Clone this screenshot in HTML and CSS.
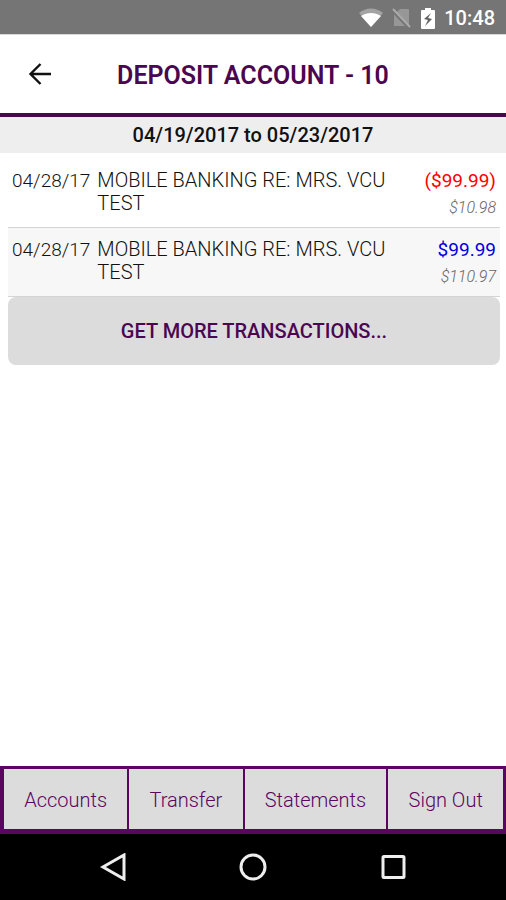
FILE: index.html
```html
<!DOCTYPE html>
<html lang="en">
<head>
<meta charset="utf-8">
<meta name="viewport" content="width=device-width, initial-scale=1">
<title>Deposit Account - 10</title>
<link rel="stylesheet" href="styles.css">
</head>
<body>
<div class="status">
  <svg class="status-icon wifi" width="24" height="20" viewBox="0 0 24 20" aria-hidden="true">
    <path d="M0 5C7-1 17-1 24 5L12 19Z" fill="#a3a3a3"/>
    <path d="M2 8C8 4 16 4 22 8L12 19Z" fill="#fff"/>
  </svg>
  <svg class="status-icon sim" width="20" height="20" viewBox="0 0 20 20" aria-hidden="true">
    <path d="M8 1H16Q17 1 17 2V18H2V7Z" fill="#979797"/>
    <path d="M0 2L17 20" stroke="#757575" stroke-width="3"/>
    <path d="M1 1L18 19" stroke="#aaa" stroke-width="2"/>
  </svg>
  <svg class="status-icon battery" width="14" height="21" viewBox="0 0 14 21" aria-hidden="true">
    <path d="M4 0H10V2H13Q14 2 14 3V20Q14 21 13 21H1Q0 21 0 20V3Q0 2 1 2H4Z" fill="#fff"/>
    <path d="M10 5L3 11L7 12L4 18L11 11L7 10Z" fill="#606060"/>
  </svg>
  <span>10:48</span>
</div>
<header class="header">
  <button class="back" type="button" aria-label="Back">
    <svg width="24" height="24" viewBox="0 0 24 24" aria-hidden="true">
      <path d="M12.500 2L2.500 12L12.500 22M2.500 12H23" fill="none" stroke="#111" stroke-width="2.400"/>
    </svg>
  </button>
  <h1>DEPOSIT ACCOUNT - 10</h1>
</header>
<main class="main">
  <h2 class="range">04/19/2017 to 05/23/2017</h2>
  <div class="list">
    <table class="transactions">
      <tbody>
        <tr>
          <td class="date">04/28/17</td>
          <td class="desc">MOBILE BANKING RE: MRS. VCU TEST</td>
          <td class="money"><span class="debit">($99.99)</span><em>$10.98</em></td>
        </tr>
        <tr>
          <td class="date">04/28/17</td>
          <td class="desc">MOBILE BANKING RE: MRS. VCU TEST</td>
          <td class="money"><span class="credit">$99.99</span><em>$110.97</em></td>
        </tr>
      </tbody>
    </table>
    <button class="more" type="button">GET MORE TRANSACTIONS...</button>
  </div>
</main>
<nav class="tabs">
  <a href="#accounts">Accounts</a>
  <a href="#transfer">Transfer</a>
  <a href="#statements">Statements</a>
  <a href="#signout">Sign Out</a>
</nav>
<div class="system">
  <button type="button" aria-label="System back">
    <svg width="28" height="28" viewBox="0 0 28 28" aria-hidden="true"><path d="M25 2V26L4 14Z"/></svg>
  </button>
  <button type="button" aria-label="Home">
    <svg width="28" height="28" viewBox="0 0 28 28" aria-hidden="true"><circle cx="14" cy="14" r="12"/></svg>
  </button>
  <button type="button" aria-label="Recent apps">
    <svg width="28" height="28" viewBox="0 0 28 28" aria-hidden="true"><rect x="4" y="3.500" width="21" height="21" rx="1"/></svg>
  </button>
</div>
</body>
</html>
```
FILE: styles.css
```css
* {
  box-sizing: border-box;
}

body {
  margin: 0;
  min-height: 100vh;
  display: flex;
  flex-direction: column;
  background: #fff;
  color: #111;
  font-family: Roboto, sans-serif;
  font-size: 19px;
  font-weight: 300;
}

button {
  font-family: inherit;
  border: 0;
  padding: 0;
  background: none;
}

svg {
  display: block;
}

.status {
  height: 34px;
  display: flex;
  align-items: center;
  justify-content: flex-end;
  gap: 9px;
  padding: 2px 11px 0 0;
  background: #757575;
  color: #fff;
  font-size: 20px;
  font-weight: 500;
}

.header {
  display: grid;
  grid-template-columns: 80px 1fr 80px;
  align-items: center;
  height: 83px;
  border-top: 1px solid #d8d8d8;
  border-bottom: 4px solid #4b0650;
}

.back {
  justify-self: center;
}

.header h1 {
  margin: 0;
  padding-top: 3px;
  color: #4b0650;
  font-size: 25px;
  font-weight: 600;
  line-height: 30px;
  text-align: center;
}

.main {
  flex: 1;
}

.range {
  margin: 0;
  background: #eee;
  color: #111;
  font-size: 20px;
  font-weight: 500;
  line-height: 36px;
  text-align: center;
}

.list {
  padding: 6px 6px 0 8px;
}

.transactions {
  width: 100%;
  border-collapse: collapse;
}

.transactions td {
  padding: 10px 4px 8px;
  border-bottom: 1px solid #d4d4d4;
  line-height: 23px;
  vertical-align: top;
}

.transactions tr:nth-child(even) {
  background: #f7f7f7;
}

.date {
  width: 86px;
}

.transactions .desc {
  padding-left: 3px;
  font-size: 20px;
}

.money {
  width: 96px;
  text-align: right;
}

.money span,
.money em {
  display: block;
}

.money span {
  font-weight: 400;
}

.money em {
  padding-top: 4px;
  color: #666;
  font-size: 16px;
}

.debit {
  color: #f00;
}

.credit {
  color: #00d;
}

.more {
  display: block;
  width: 100%;
  height: 68px;
  border-radius: 8px;
  background: #dcdcdc;
  color: #4b0650;
  font-size: 20px;
  font-weight: 500;
}

.tabs {
  display: flex;
  gap: 2px;
  padding: 3px 3px 5px 4px;
  background: #5a0560;
}

.tabs a {
  flex: 1 1 auto;
  padding-top: 2px;
  background: #dcdcdc;
  color: #5a0560;
  font-size: 20px;
  line-height: 58px;
  text-align: center;
  text-decoration: none;
}

.system {
  display: flex;
  align-items: center;
  justify-content: center;
  gap: 112px;
  height: 66px;
  background: #000;
}

.system svg {
  fill: none;
  stroke: #eee;
  stroke-width: 3;
}
```
